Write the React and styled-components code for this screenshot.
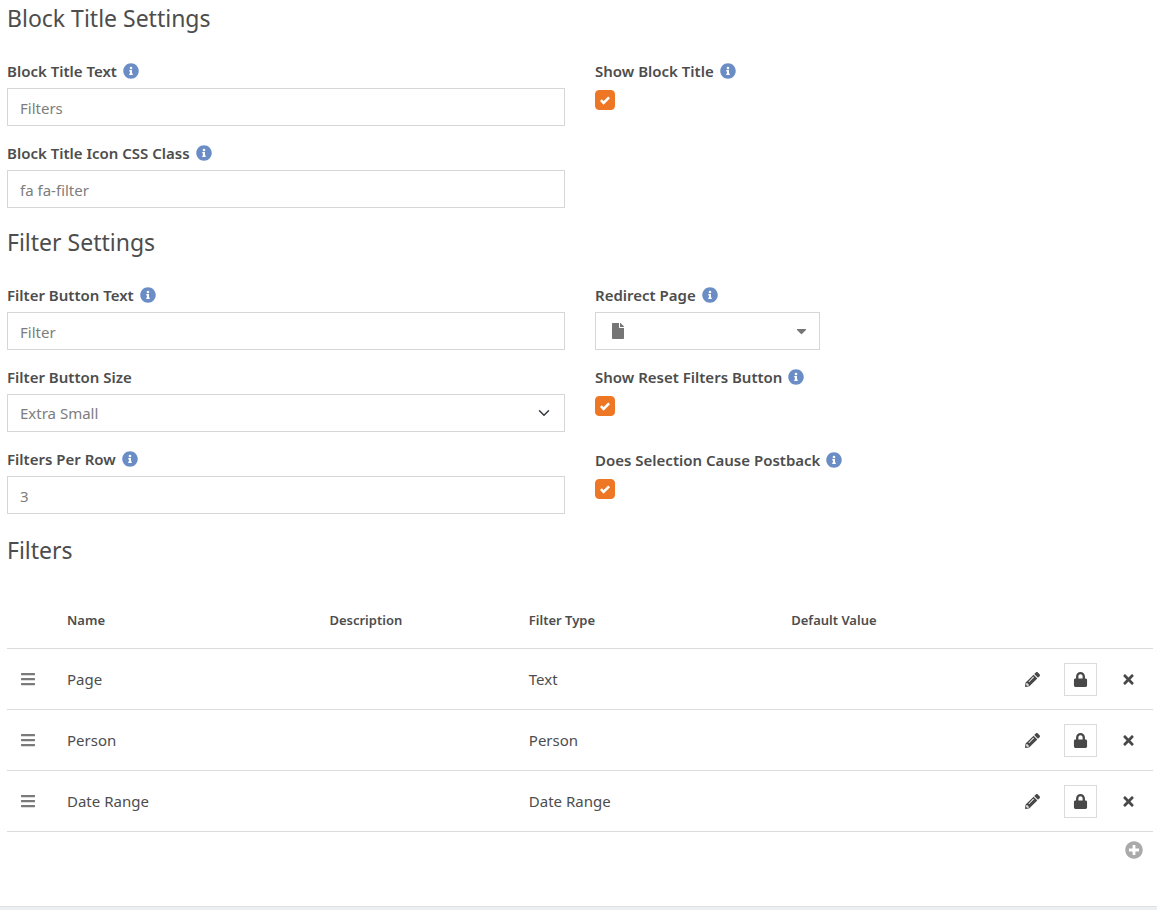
import React from "react";
import styled, { createGlobalStyle } from "styled-components";
import {
  FaBars,
  FaCaretDown,
  FaFile,
  FaInfoCircle,
  FaLock,
  FaPencilAlt,
  FaPlusCircle,
  FaTimes,
} from "react-icons/fa";

const GlobalStyle = createGlobalStyle`
  *, *::before, *::after { box-sizing: border-box; }
  body {
    margin: 0;
    background: #edf0f3;
    color: #4d4d4d;
    font-family: "Segoe UI", "Noto Sans", "Open Sans", sans-serif;
    font-size: 15px;
    line-height: 24px;
  }
  button, input, select { font: inherit; }
`;

const Panel = styled.main`
  padding: 0 4px 38px 7px;
  background: #fff;
  border-bottom: 1px solid #dfe0e1;
`;

const Heading = styled.h2`
  margin: 0 0 23px;
  font-size: 23px;
  font-weight: 400;
  line-height: 36px;
`;

const Columns = styled.div`
  display: grid;
  grid-template-columns: 1fr 1fr;
  column-gap: 30px;
  padding-bottom: 16px;
`;

const Column = styled.div`
  display: flex;
  flex-direction: column;
  gap: 15px;
`;

const Group = styled.div``;

const LabelRow = styled.div`
  display: flex;
  align-items: center;
  gap: 6px;
  height: 24px;
  margin-bottom: 5px;
`;

const Label = styled.label`
  font-weight: 600;
`;

const HelpButton = styled.button`
  display: flex;
  padding: 0;
  border: 0;
  background: none;
  color: #6a8dc5;
  font-size: 16px;
  cursor: pointer;
`;

const TextInput = styled.input`
  display: block;
  width: 100%;
  height: 38px;
  padding: 2px 12px 0;
  border: 1px solid #d6d6d6;
  border-radius: 0;
  background: #fff;
  color: #7d7d7d;
`;

const SelectBox = styled.div`
  display: grid;
  align-items: center;

  > * { grid-area: 1 / 1; }
  > svg {
    justify-self: end;
    margin-right: 14px;
    pointer-events: none;
  }
`;

const Select = styled.select`
  appearance: none;
  width: 100%;
  height: 38px;
  padding: 0 36px 0 12px;
  border: 1px solid #d6d6d6;
  border-radius: 0;
  background: #fff;
  color: #7d7d7d;
`;

const PickerButton = styled.button`
  display: flex;
  align-items: center;
  justify-content: space-between;
  width: 225px;
  height: 38px;
  padding: 0 12px 0 14px;
  border: 1px solid #d6d6d6;
  background: #fff;
  color: #757575;
  font-size: 16px;
  cursor: pointer;

  > svg:last-child {
    width: 11px;
    height: 16px;
  }
`;

const CheckArea = styled.div`
  display: grid;
  align-items: start;
  justify-items: start;
  height: 39px;
  padding-top: 2px;

  > * { grid-area: 1 / 1; }
  > svg {
    width: 12px;
    height: 12px;
    margin: 4px;
    color: #fff;
    pointer-events: none;
  }
`;

const Checkbox = styled.input`
  appearance: none;
  width: 20px;
  height: 20px;
  margin: 0;
  border: 1px solid #c4c4c4;
  border-radius: 4px;
  background: #fff;

  &:checked {
    border-color: #ee7725;
    background: #ee7725;
  }
  &:not(:checked) + svg { visibility: hidden; }
`;

const Table = styled.table`
  width: 100%;
  border-spacing: 0;
  table-layout: fixed;
`;

const Col = styled.col`
  width: ${(p) => p.$width};
`;

const HeadCell = styled.th`
  height: 58px;
  padding: 0 12px;
  border-bottom: 1px solid #dbdbdb;
  font-size: 13px;
  font-weight: 600;
  text-align: left;
`;

const Cell = styled.td`
  height: 61px;
  padding: 0 12px;
  border-bottom: 1px solid #dbdbdb;
`;

const ActionCell = styled(Cell)`
  padding: 0 8px 0 7px;
`;

const IconButton = styled.button`
  display: flex;
  align-items: center;
  justify-content: center;
  width: 33px;
  height: 33px;
  padding: 0;
  border: 1px solid ${(p) => (p.$outlined ? "#dbdbdb" : "transparent")};
  background: none;
  color: #484848;
  font-size: 15px;
  cursor: pointer;
`;

const Handle = styled.button`
  display: flex;
  padding: 0;
  margin-left: 1px;
  border: 0;
  background: none;
  color: #7a7a7a;
  font-size: 16px;
  cursor: move;
`;

const TableFooter = styled.div`
  display: flex;
  justify-content: flex-end;
  padding: 9px 10px 9px 0;
`;

const AddButton = styled.button`
  display: flex;
  padding: 0;
  border: 0;
  background: none;
  color: #aaa;
  font-size: 18px;
  cursor: pointer;
`;

function CheckIcon() {
  return (
    <svg viewBox="0 0 12 12" fill="none" stroke="currentColor" strokeWidth="2.6" aria-hidden="true">
      <path d="M1.9 6.1l2.7 2.7 5.5-5.5" />
    </svg>
  );
}

function Field({ id, label, help = true, children }) {
  return (
    <Group>
      <LabelRow>
        <Label htmlFor={id}>{label}</Label>
        {help && (
          <HelpButton type="button" aria-label={`Help: ${label}`}>
            <FaInfoCircle />
          </HelpButton>
        )}
      </LabelRow>
      {children}
    </Group>
  );
}

function TextField({ id, label, value }) {
  return (
    <Field id={id} label={label}>
      <TextInput id={id} type="text" defaultValue={value} />
    </Field>
  );
}

function CheckField({ id, label }) {
  return (
    <Field id={id} label={label}>
      <CheckArea>
        <Checkbox id={id} type="checkbox" defaultChecked />
        <CheckIcon />
      </CheckArea>
    </Field>
  );
}

const filters = [
  { name: "Page", type: "Text" },
  { name: "Person", type: "Person" },
  { name: "Date Range", type: "Date Range" },
];

export default function App() {
  return (
    <>
      <GlobalStyle />
      <Panel>
        <Heading>Block Title Settings</Heading>
        <Columns>
          <Column>
            <TextField id="title-text" label="Block Title Text" value="Filters" />
            <TextField id="title-icon" label="Block Title Icon CSS Class" value="fa fa-filter" />
          </Column>
          <Column>
            <CheckField id="show-title" label="Show Block Title" />
          </Column>
        </Columns>

        <Heading>Filter Settings</Heading>
        <Columns>
          <Column>
            <TextField id="button-text" label="Filter Button Text" value="Filter" />
            <Field id="button-size" label="Filter Button Size" help={false}>
              <SelectBox>
                <Select id="button-size" defaultValue="xs">
                  <option value="normal">Normal</option>
                  <option value="sm">Small</option>
                  <option value="xs">Extra Small</option>
                </Select>
                <svg width="14" height="12" viewBox="0 0 16 16" fill="none" stroke="#343a40" strokeWidth="2" strokeLinecap="round" strokeLinejoin="round" aria-hidden="true">
                  <path d="M2 5l6 6 6-6" />
                </svg>
              </SelectBox>
            </Field>
            <TextField id="per-row" label="Filters Per Row" value="3" />
          </Column>
          <Column>
            <Field id="redirect-page" label="Redirect Page">
              <PickerButton id="redirect-page" type="button">
                <FaFile />
                <FaCaretDown />
              </PickerButton>
            </Field>
            <CheckField id="show-reset" label="Show Reset Filters Button" />
            <CheckField id="postback" label="Does Selection Cause Postback" />
          </Column>
        </Columns>

        <Heading>Filters</Heading>
        <Table>
          <colgroup>
            <Col $width="48px" />
            <Col $width="22.9%" />
            <Col $width="17.4%" />
            <Col $width="22.9%" />
            <Col $width="auto" />
            <Col $width="48px" />
            <Col $width="48px" />
            <Col $width="48px" />
          </colgroup>
          <thead>
            <tr>
              <HeadCell />
              <HeadCell scope="col">Name</HeadCell>
              <HeadCell scope="col">Description</HeadCell>
              <HeadCell scope="col">Filter Type</HeadCell>
              <HeadCell scope="col">Default Value</HeadCell>
              <HeadCell />
              <HeadCell />
              <HeadCell />
            </tr>
          </thead>
          <tbody>
            {filters.map(({ name, type }) => (
              <tr key={name}>
                <Cell>
                  <Handle type="button" aria-label={`Reorder ${name}`}>
                    <FaBars />
                  </Handle>
                </Cell>
                <Cell>{name}</Cell>
                <Cell />
                <Cell>{type}</Cell>
                <Cell />
                <ActionCell>
                  <IconButton type="button" aria-label={`Edit ${name}`}>
                    <FaPencilAlt />
                  </IconButton>
                </ActionCell>
                <ActionCell>
                  <IconButton type="button" $outlined aria-label={`Security for ${name}`}>
                    <FaLock />
                  </IconButton>
                </ActionCell>
                <ActionCell>
                  <IconButton type="button" aria-label={`Delete ${name}`}>
                    <FaTimes />
                  </IconButton>
                </ActionCell>
              </tr>
            ))}
          </tbody>
        </Table>
        <TableFooter>
          <AddButton type="button" aria-label="Add filter">
            <FaPlusCircle />
          </AddButton>
        </TableFooter>
      </Panel>
    </>
  );
}
